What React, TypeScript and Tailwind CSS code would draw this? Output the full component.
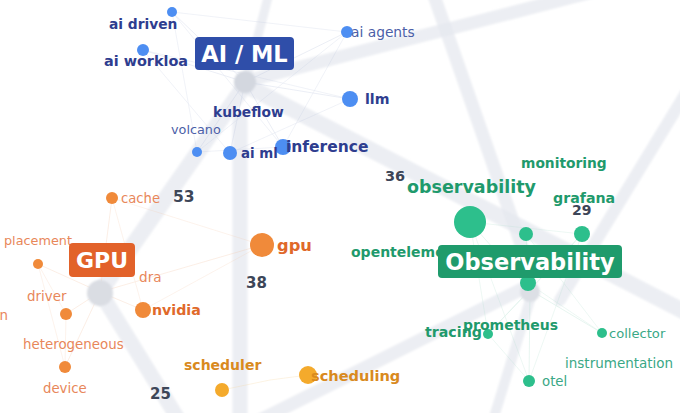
const FONT = '"DejaVu Sans", "Liberation Sans", sans-serif';

type Band = { x1: number; y1: number; x2: number; y2: number; w: number };

const bands: Band[] = [
  { x1: 245, y1: 85, x2: 720, y2: 330, w: 16 },
  { x1: 240, y1: 120, x2: 240, y2: 430, w: 15 },
  { x1: 245, y1: 85, x2: 100, y2: 292, w: 16 },
  { x1: 100, y1: 292, x2: 185, y2: 430, w: 15 },
  { x1: 530, y1: 270, x2: 432, y2: -10, w: 13 },
  { x1: 250, y1: 80, x2: 600, y2: -10, w: 13 },
  { x1: 560, y1: 300, x2: 700, y2: 70, w: 12 },
  { x1: 240, y1: 430, x2: 530, y2: 285, w: 13 },
  { x1: 490, y1: 430, x2: 530, y2: 300, w: 10 },
  { x1: 245, y1: 85, x2: 270, y2: -10, w: 9 },
];

type Dot = { x: number; y: number; r: number };

const blue = '#4d8ef2';
const orange = '#f08a3a';
const amber = '#f4aa2c';
const green = '#2dbf8c';

const aiNodes: Dot[] = [
  { x: 172, y: 12, r: 5 },
  { x: 143, y: 50, r: 6 },
  { x: 347, y: 32, r: 6 },
  { x: 350, y: 99, r: 8 },
  { x: 197, y: 152, r: 5 },
  { x: 230, y: 153, r: 7 },
  { x: 283, y: 147, r: 8 },
];

const gpuNodes: Dot[] = [
  { x: 112, y: 198, r: 6 },
  { x: 38, y: 264, r: 5 },
  { x: 262, y: 245, r: 12 },
  { x: 66, y: 314, r: 6 },
  { x: 143, y: 310, r: 8 },
  { x: 65, y: 367, r: 6 },
];

const schedNodes: Dot[] = [
  { x: 222, y: 390, r: 7 },
  { x: 308, y: 375, r: 9 },
];

const obsNodes: Dot[] = [
  { x: 470, y: 222, r: 16 },
  { x: 526, y: 234, r: 7 },
  { x: 582, y: 234, r: 8 },
  { x: 528, y: 283, r: 8 },
  { x: 488, y: 334, r: 5 },
  { x: 602, y: 333, r: 5 },
  { x: 529, y: 381, r: 6 },
];

function spokes(cx: number, cy: number, pts: Dot[], color: string) {
  const lines: JSX.Element[] = [];
  pts.forEach((p, i) => {
    lines.push(
      <line key={`c${i}`} x1={cx} y1={cy} x2={p.x} y2={p.y} stroke={color} strokeWidth={0.8} />
    );
    pts.forEach((q, j) => {
      if (j > i && (i + j) % 2 === 0) {
        lines.push(
          <line key={`e${i}-${j}`} x1={p.x} y1={p.y} x2={q.x} y2={q.y} stroke={color} strokeWidth={0.6} />
        );
      }
    });
  });
  return lines;
}

type Label = {
  x: number;
  y: number;
  text: string;
  color: string;
  size: number;
  bold?: boolean;
  anchor?: 'start' | 'end' | 'middle';
};

const navy = '#2e3d8f';
const navyLight = '#4b60a8';
const orangeText = '#e0692a';
const orangeLight = '#e8875a';
const amberText = '#d98a1e';
const greenText = '#1f9a6c';
const greenLight = '#3aa886';
const num = '#3d4658';

const labels: Label[] = [
  { x: 109, y: 24, text: 'ai driven', color: navy, size: 13.8, bold: true },
  { x: 104, y: 61, text: 'ai workloa', color: navy, size: 14.4, bold: true },
  { x: 351, y: 32, text: 'ai agents', color: navyLight, size: 13.8 },
  { x: 365, y: 99, text: 'llm', color: navy, size: 14.2, bold: true },
  { x: 213, y: 112, text: 'kubeflow', color: navy, size: 13.8, bold: true },
  { x: 171, y: 129, text: 'volcano', color: navyLight, size: 12.8 },
  { x: 241, y: 153, text: 'ai ml', color: navy, size: 13.4, bold: true },
  { x: 286, y: 147, text: 'inference', color: navy, size: 15.5, bold: true },

  { x: 121, y: 198, text: 'cache', color: orangeLight, size: 13.2 },
  { x: 173, y: 197, text: '53', color: num, size: 15.5, bold: true },
  { x: 4, y: 240, text: 'placement', color: orangeLight, size: 12.8 },
  { x: 139, y: 277, text: 'dra', color: orangeLight, size: 13.6 },
  { x: 277, y: 245, text: 'gpu', color: orangeText, size: 16.3, bold: true },
  { x: 246, y: 283, text: '38', color: num, size: 15, bold: true },
  { x: 27, y: 296, text: 'driver', color: orangeLight, size: 13.4 },
  { x: 8, y: 315, text: 'allocation', color: orangeLight, size: 13.4, anchor: 'end' },
  { x: 152, y: 310, text: 'nvidia', color: orangeText, size: 14.2, bold: true },
  { x: 23, y: 344, text: 'heterogeneous', color: orangeLight, size: 13.4 },
  { x: 43, y: 388, text: 'device', color: orangeLight, size: 13.3 },
  { x: 150, y: 394, text: '25', color: num, size: 15, bold: true },

  { x: 184, y: 365, text: 'scheduler', color: amberText, size: 14, bold: true },
  { x: 311, y: 375, text: 'scheduling', color: amberText, size: 14.6, bold: true },

  { x: 521, y: 163, text: 'monitoring', color: greenText, size: 13.8, bold: true },
  { x: 385, y: 176, text: '36', color: num, size: 14.5, bold: true },
  { x: 407, y: 187, text: 'observability', color: greenText, size: 17.5, bold: true },
  { x: 553, y: 198, text: 'grafana', color: greenText, size: 14.2, bold: true },
  { x: 572, y: 210, text: '29', color: num, size: 14, bold: true },
  { x: 351, y: 252, text: 'opentelemetry', color: greenText, size: 14, bold: true },
  { x: 463, y: 325, text: 'prometheus', color: greenText, size: 14, bold: true },
  { x: 425, y: 332, text: 'tracing', color: greenText, size: 14.2, bold: true },
  { x: 609, y: 333, text: 'collector', color: greenLight, size: 13.1 },
  { x: 565, y: 363, text: 'instrumentation', color: greenLight, size: 13.5 },
  { x: 542, y: 381, text: 'otel', color: greenLight, size: 13.3 },
];

function Dots({ pts, fill }: { pts: Dot[]; fill: string }) {
  return (
    <g>
      {pts.map((p, i) => (
        <circle key={i} cx={p.x} cy={p.y} r={p.r} fill={fill} />
      ))}
    </g>
  );
}

export default function App() {
  return (
    <div className="relative w-[680px] h-[413px] overflow-hidden bg-white">
      <svg className="absolute inset-0" width={680} height={413} viewBox="0 0 680 413">
        <defs>
          <filter id="soft" x="-20%" y="-20%" width="140%" height="140%">
            <feGaussianBlur stdDeviation="1.2" />
          </filter>
        </defs>

        {/* inter-cluster bands */}
        <g filter="url(#soft)">
          {bands.map((b, i) => (
            <line
              key={i}
              x1={b.x1}
              y1={b.y1}
              x2={b.x2}
              y2={b.y2}
              stroke="#e6e8ef"
              strokeOpacity={0.75}
              strokeWidth={b.w}
              strokeLinecap="round"
            />
          ))}
        </g>

        {/* intra-cluster edges */}
        <g opacity={0.35}>
          {spokes(245, 82, aiNodes, '#b9c3dc')}
          {spokes(100, 292, gpuNodes, '#f3c4a4')}
          {spokes(270, 380, schedNodes, '#f5d49a')}
          {spokes(530, 290, obsNodes, '#a9dcc9')}
        </g>

        {/* cluster centroids */}
        <g filter="url(#soft)">
          <circle cx={245} cy={82} r={11} fill="#d3d7df" />
          <circle cx={100} cy={293} r={13} fill="#dadde3" />
          <circle cx={530} cy={292} r={10} fill="#dcdfe5" />
        </g>

        <Dots pts={aiNodes} fill={blue} />
        <Dots pts={gpuNodes} fill={orange} />
        <Dots pts={schedNodes} fill={amber} />
        <Dots pts={obsNodes} fill={green} />

        <g fontFamily={FONT} dominantBaseline="central">
          {labels.map((l, i) => (
            <text
              key={i}
              x={l.x}
              y={l.y}
              fill={l.color}
              fontSize={l.size}
              fontWeight={l.bold ? 700 : 400}
              textAnchor={l.anchor ?? 'start'}
            >
              {l.text}
            </text>
          ))}
        </g>

        {/* cluster title boxes */}
        <g fontFamily={FONT} fontWeight={700} fill="#fff" textAnchor="middle" dominantBaseline="central">
          <rect x={195} y={37} width={99} height={33} rx={4} fill="#2f4ea9" />
          <text x={244.5} y={54} fontSize={22.5}>AI / ML</text>

          <rect x={69} y={243} width={66} height={34} rx={4} fill="#e2622a" />
          <text x={102} y={260.5} fontSize={22}>GPU</text>

          <rect x={438} y={245} width={184} height={33} rx={4} fill="#1f9b6c" />
          <text x={530} y={262} fontSize={22.5}>Observability</text>
        </g>
      </svg>
    </div>
  );
}
